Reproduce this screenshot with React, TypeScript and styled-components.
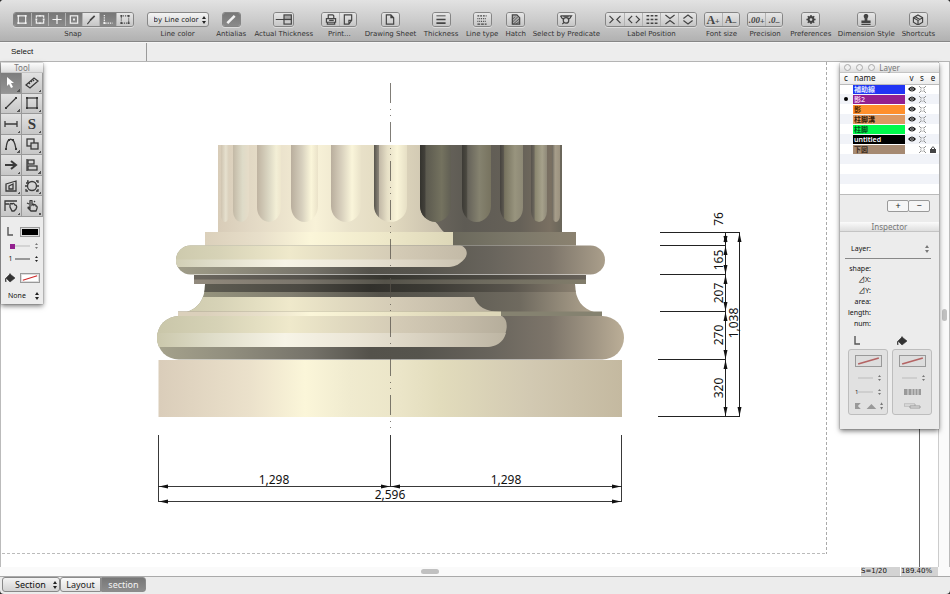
import React from "react";
import styled, { createGlobalStyle, css } from "styled-components";

const ui = `"Noto Sans", "Open Sans", "Noto Sans CJK JP", sans-serif`;
const wide = `"DejaVu Sans", "Noto Sans", sans-serif`;
const INK = "#444";

const GlobalStyle = createGlobalStyle`
  * { box-sizing: border-box; }
  html, body, #root { height: 100%; }
  body { margin: 0; background: #2a2a2a; font-family: ${ui}; font-size: 8px; line-height: 10px; color: #222; }
  button, select { font: inherit; color: inherit; margin: 0; padding: 0; }
`;

const Window = styled.div`
  display: flex;
  flex-direction: column;
  height: 100%;
  min-height: 480px;
  overflow: hidden;
  border-radius: 4px;
  background: #ececec;
`;

/* ---------- toolbar ---------- */

const Toolbar = styled.header`
  display: flex;
  justify-content: space-between;
  height: 42px;
  flex: none;
  padding: 12px 15px 0 13px;
  background: linear-gradient(#e2e2e2, #cbcbcb 50%, #b1b1b1);
  border-bottom: 1px solid #868686;
`;

const Group = styled.div<{ $w: number; $gap?: boolean }>`
  display: flex;
  flex-direction: column;
  align-items: center;
  gap: 2px;
  width: ${(p) => p.$w}px;
  margin-left: ${(p) => (p.$gap ? 6 : 0)}px;
`;

const Caption = styled.span`
  font-family: ${wide};
  font-size: 7px;
  line-height: 10px;
  color: #333;
  white-space: nowrap;
`;

const Segments = styled.div`
  display: flex;
  height: 15px;
  border: 1px solid #858585;
  border-radius: 3px;
  overflow: hidden;
  box-shadow: 0 1px 0 #dcdcdc;
`;

const Segment = styled.button<{ $on?: boolean; $w?: number }>`
  display: flex;
  align-items: center;
  justify-content: center;
  width: ${(p) => p.$w ?? 17}px;
  height: 13px;
  border: 0;
  background: ${(p) => (p.$on ? "linear-gradient(#777, #8b8b8b)" : "linear-gradient(#e6e6e6, #c6c6c6)")};
  color: ${(p) => (p.$on ? "#f2f2f2" : INK)};
  & + & { border-left: 1px solid ${(p) => (p.$on ? "#868686" : "#b2b2b2")}; }
`;

const SelectWrap = styled.span<{ $w?: number; $h?: number; $plain?: boolean }>`
  position: relative;
  display: inline-flex;
  align-items: center;
  width: ${(p) => (p.$w ? `${p.$w}px` : "100%")};
  height: ${(p) => p.$h ?? 10}px;
  ${(p) =>
    !p.$plain &&
    css`
      border: 1px solid #888;
      border-radius: 3px;
      background: linear-gradient(#f4f4f4, #d2d2d2);
    `}
  & > svg { position: absolute; right: 2px; pointer-events: none; }
`;

const Select = styled.select<{ $size?: number; $pad?: number; $wide?: boolean }>`
  appearance: none;
  width: 100%;
  height: 100%;
  border: 0;
  background: transparent;
  padding: 0 0 0 ${(p) => p.$pad ?? 0}px;
  font-family: ${(p) => (p.$wide ? wide : ui)};
  font-size: ${(p) => p.$size ?? 8}px;
  line-height: 10px;
  color: #111;
`;

const Arrows = ({ light }: { light?: boolean }) => (
  <svg width="4" height="8" viewBox="0 0 4 8" fill={light ? "#777" : "#222"}>
    <path d="M0 3 2 0 4 3zM0 5h4L2 8z" />
  </svg>
);

const icons: Record<string, React.ReactNode> = {
  snapEnd: (<><rect x="3" y="2" width="8" height="8" /><path d="M2 1h2v2H2zM10 1h2v2h-2zM2 9h2v2H2zM10 9h2v2h-2z" fill="currentColor" stroke="none" /></>),
  snapMid: (<><path d="M3 4V2h3M8 2h3v2M11 7v3H8M6 10H3V7" /><path d="M6 1h2v2H6zM6 9h2v2H6zM2 5h2v2H2zM10 5h2v2h-2z" fill="currentColor" stroke="none" /></>),
  snapCross: (<><path d="M7 1v10M2 6h10" /><circle cx="7" cy="6" r="1" fill="currentColor" stroke="none" /></>),
  snapCenter: (<><rect x="3" y="2" width="8" height="8" /><path d="M6 5h2v2H6z" fill="currentColor" stroke="none" /></>),
  snapLine: (<><path d="M3 11 7 6" /><path d="M6 7 11 2" strokeWidth="1.8" /></>),
  snapAxis: (<><path d="M3 1v9h9" strokeDasharray="1.5 1" /><path d="M2 9h2v2H2z" fill="currentColor" stroke="none" /></>),
  snapGrid: (<><rect x="3" y="2" width="8" height="8" strokeDasharray="1 1" /><path d="M2 1h2v2H2zM10 1h2v2h-2zM2 9h2v2H2zM10 9h2v2h-2z" fill="currentColor" stroke="none" /></>),
  antialias: <path d="M3 10 11 2" strokeWidth="2.8" />,
  actual: (<><path d="M0 6h9" /><rect x="9" y="1" width="8" height="5" fill="#a5a5a5" /><rect x="9" y="6" width="8" height="5" fill="#ccc" /></>),
  print: (<><path d="M4 5V1h5l1 1v3M2 9V5h10v4zM3 9h8v2H3zM5 7h5" /></>),
  page: (<><path d="M3 1h8v6l-3 4H3zM11 7H8v4" /></>),
  sheet: <path d="M3 1h5l3 3v7H3zM8 1v3h3" />,
  thickness: (<><path d="M2 2h10" strokeWidth="1" /><path d="M2 6h10" strokeWidth="1.6" /><path d="M2 10h10" strokeWidth="2" /></>),
  linetype: (<><path d="M2 2h10" strokeDasharray="2 1" /><path d="M2 5h10M2 8h10" strokeDasharray="1 1" /><path d="M2 11h10" strokeDasharray="3 1" /></>),
  hatch: (<><path d="M3 1h5l3 3v7H3z" fill="#aaa" /><path d="m3 6 3-3M3 9l6-6M4 11l7-6M7 11l4-3" strokeWidth=".8" /></>),
  predicate: (<><path d="M1 2h12l-2 3h-2M1 2l2 3h2" /><path d="M4 3h6" /><circle cx="7" cy="7" r="3" /><path d="m5 9-2 2" /></>),
  lp1: <path d="m1 2 4 4-4 4M13 2 9 6l4 4" />,
  lp2: <path d="M5 2 1 6l4 4M9 2l4 4-4 4" />,
  lp3: <path d="M1 2h12M1 6h12M1 10h12" strokeDasharray="3 1.5" strokeWidth="1.6" />,
  lp4: <path d="m2 1 5 4 5-4M2 11l5-4 5 4" />,
  lp5: <path d="m2 5 5-4 5 4M2 7l5 4 5-4" />,
  gear: (<><circle cx="7" cy="6" r="2.6" strokeWidth="2.2" /><path d="M7 1v2M7 9v2M2 6h2M10 6h2M3.5 2.5 5 4M9 8l1.5 1.5M10.5 2.5 9 4M5 8 3.5 9.5" strokeWidth="1.6" /></>),
  stamp: <path d="M7 0c3 0 3 3 1.5 5v2H12v3H2V7h3.5V5C4 3 4 0 7 0zM2 11h10v1H2z" fill="currentColor" stroke="none" />,
  box: <path d="m7 1 5 3v5l-5 3-5-3V4zM2 4l5 3 5-3M7 7v5M4 3l5 3" />,
  arrow: <path d="m3 0 7 6H7l2 4-2 1-2-4-2 2z" fill="#fff" stroke="none" />,
  ruler: <path d="m1 8 8-7 4 3-8 7zM4 6l1 1M6 4l1 1M8 3l1 1" />,
  line: (<><path d="m2 11 10-10" /><path d="M1 10h2v2H1zM11 0h2v2h-2z" fill="currentColor" stroke="none" /></>),
  rect: (<><rect x="2" y="1" width="10" height="10" /><path d="M1 0h2v2H1zM11 0h2v2h-2zM1 10h2v2H1zM11 10h2v2h-2z" fill="currentColor" stroke="none" /></>),
  dim: <path d="M1 3v6M13 3v6M1 6h12" />,
  arc: (<><path d="M2 11C3-2 10-2 12 11" /><path d="M1 10h2v2H1zM11 10h2v2h-2zM4 1h2v2H4zM8 1h2v2H8z" fill="currentColor" stroke="none" /></>),
  copy: (<><rect x="2" y="1" width="7" height="7" /><rect x="6" y="5" width="7" height="6" fill="#ccc" /></>),
  right: <path d="M1 6h10M7 2l5 4-5 4" strokeWidth="2" />,
  align: (<><path d="M2 0v12" /><rect x="3" y="1" width="6" height="4" /><rect x="3" y="7" width="9" height="4" /></>),
  offset: (<><path d="m2 4 10-3v10H2zM5 6l4-2v5H5z" /></>),
  circle: (<><circle cx="7" cy="6" r="4.5" /><path d="M2 1h1v2H1M11 1h2v2M1 9v2h2M13 9v2h-2M0 6h2M12 6h2" /></>),
  handL: (<><path d="M1 11V1h12M1 4h4" /><path d="M6 7V4c1-1 1-1 2 0 1-1 2-1 3 1 2 0 2 2 1 4l-2 2H8z" /></>),
  hand: <path d="M5 8V1c0-1 2-1 2 0v4c1-1 2-1 2 0 1-1 2 0 2 1 2 0 1 3 0 5H6L3 8c0-1 1-1 2 0zM2 3l2 1M9 2l1-1" />,
};

const Icon = ({ name, w = 14, h = 12 }: { name: string; w?: number; h?: number }) => (
  <svg width={w} height={h} viewBox={name === "actual" ? "0 0 18 12" : "0 0 14 12"} fill="none" stroke="currentColor" strokeWidth="1.3" aria-hidden="true">
    {icons[name]}
  </svg>
);

const Glyph = styled.span<{ $size: number }>`
  display: flex;
  align-items: flex-end;
  font-family: "Liberation Serif", serif;
  font-weight: bold;
  font-size: ${(p) => p.$size}px;
  line-height: 12px;
  white-space: nowrap;
  & > small { font-size: 8px; line-height: 8px; }
`;

type Seg = { icon?: string; on?: boolean; label: string; glyph?: React.ReactNode };
const Tool = ({ w, caption, items, seg = 17 }: { w: number; caption: string; items: Seg[]; seg?: number }) => (
  <Group $w={w}>
    <Segments role="group" aria-label={caption}>
      {items.map((it) => (
        <Segment key={it.label} type="button" aria-label={it.label} aria-pressed={it.on} $on={it.on} $w={seg}>
          {it.icon ? <Icon name={it.icon} w={it.icon === "actual" ? 18 : 14} h={11} /> : it.glyph}
        </Segment>
      ))}
    </Segments>
    <Caption>{caption}</Caption>
  </Group>
);

const StatusBar = styled.div`
  display: flex;
  flex: none;
  height: 20px;
  align-items: stretch;
  border-top: 1px solid #f6f6f6;
  border-bottom: 1px solid #b4b4b4;
  background: #ededed;
`;

const Mode = styled.div`
  width: 147px;
  padding: 4px 0 0 11px;
  border-right: 1px solid #9a9a9a;
  font-family: "Liberation Sans", sans-serif;
  color: #111;
`;

/* ---------- workspace ---------- */

const Workspace = styled.main`
  position: relative;
  display: grid;
  grid-template-columns: minmax(0, 1fr) 12px;
  flex: 1;
  min-height: 0;
`;

const Sheet = styled.div`
  background: #fff;
  border-left: 1px solid #bbb;
  min-height: 0;
  & > svg { display: block; width: 100%; height: 100%; }
`;

const VScroll = styled.div`
  display: flex;
  align-items: center;
  justify-content: center;
  border-left: 1px solid #ccc;
  border-right: 1px solid #bbb;
  background: #fafafa;
`;

const Thumb = styled.div<{ $w: number; $h: number }>`
  width: ${(p) => p.$w}px;
  height: ${(p) => p.$h}px;
  border-radius: 3px;
  background: #c1c1c1;
`;

const BottomStrip = styled.div`
  display: grid;
  grid-template-columns: minmax(0, 1fr) 40px 38px 12px;
  flex: none;
  height: 10px;
  background: #fafafa;
  border-bottom: 1px solid #aaa;
`;

const HScroll = styled.div`
  display: flex;
  align-items: center;
  justify-content: center;
`;

const Readout = styled.output`
  border-left: 1px solid #fff;
  background: #d3d3d3;
  font-family: ${wide};
  font-size: 7px;
  line-height: 9px;
  color: #111;
  white-space: nowrap;
`;

const Footer = styled.footer`
  display: flex;
  flex: none;
  height: 17px;
  padding: 0 2px 2px;
`;

const Tab = styled.button<{ $on?: boolean }>`
  width: ${(p) => (p.$on ? 45 : 41)}px;
  border: 1px solid #8b8b8b;
  background: ${(p) => (p.$on ? "linear-gradient(#777, #8c8c8c)" : "linear-gradient(#fbfbfb, #dedede)")};
  color: ${(p) => (p.$on ? "#f4f4f4" : "#222")};
  border-radius: ${(p) => (p.$on ? "0 3px 3px 0" : "3px 0 0 3px")};
  font-size: 9px;
  line-height: 12px;
`;

/* ---------- drawing ---------- */

type Stop = [number, string];
const Grad = ({ id, a, b, stops }: { id: string; a: number; b: number; stops: Stop[] }) => (
  <linearGradient id={id} gradientUnits="userSpaceOnUse" x1={a} x2={b} y1="0" y2="0">
    {stops.map(([x, c]) => (
      <stop key={x} offset={(x - a) / (b - a)} stopColor={c} />
    ))}
  </linearGradient>
);

const flutes: { a: number; b: number; stops: [number, string][] }[] = [
  { a: 221, b: 229, stops: [[0, "#cfc4b0"], [0.6, "#e6e0ce"], [1, "#d9cfbb"]] },
  { a: 233, b: 249, stops: [[0, "#c3b9a6"], [0.6, "#dedbc8"], [1, "#e6dcc8"]] },
  { a: 257, b: 281, stops: [[0, "#bfb3a1"], [0.5, "#dcd8c4"], [0.8, "#f3efd6"], [1, "#eee6cd"]] },
  { a: 291, b: 318, stops: [[0, "#b9ae9d"], [0.4, "#d6cfbd"], [0.75, "#fbf6da"], [1, "#eae2c9"]] },
  { a: 331, b: 361, stops: [[0, "#b9ae9d"], [0.35, "#d8d0bd"], [0.7, "#faf5da"], [1, "#e9e2c9"]] },
  { a: 374, b: 407, stops: [[0, "#57544c"], [0.15, "#8d877b"], [0.16, "#c2b9a7"], [0.4, "#e6dfc6"], [0.7, "#faf5d9"], [1, "#e6dfc5"]] },
  { a: 420, b: 451, stops: [[0, "#34332e"], [0.15, "#42403a"], [0.2, "#5c5a4f"], [0.7, "#74725f"], [1, "#615f54"]] },
  { a: 462, b: 491, stops: [[0, "#3c3a35"], [0.15, "#4a4840"], [0.2, "#66635a"], [0.6, "#85826f"], [1, "#77735f"]] },
  { a: 500, b: 523, stops: [[0, "#45423d"], [0.15, "#5a564e"], [0.2, "#77735f"], [0.65, "#98947e"], [1, "#8d8875"]] },
  { a: 531, b: 547, stops: [[0, "#57534c"], [0.2, "#6b665c"], [0.25, "#8a866f"], [0.7, "#a6a18b"], [1, "#8f8979"]] },
  { a: 552, b: 560, stops: [[0, "#6b665d"], [0.4, "#a69d8a"], [1, "#9c927f"]] },
];

const flutePath = (a: number, b: number) => {
  const r = (b - a) / 2;
  const ry = Math.min(16, r + 3);
  return `M${a} 145V${222 - ry}A${r} ${ry} 0 0 0 ${b} ${222 - ry}V145z`;
};

const arrowH = (x: number, y: number, d: number) => `M${x} ${y}l${d * 9} -2v4z`;
const arrowV = (x: number, y: number, d: number) => `M${x} ${y}l-2 ${d * 9}h4z`;

const DimText = styled.text`
  font-family: "Noto Sans", "Open Sans", sans-serif;
  font-size: 12px;
  text-anchor: middle;
  fill: #111;
`;

const levels = [232, 245, 274, 311, 359, 416];

const arrowheads = [
  arrowH(159, 486.5, 1), arrowH(390, 486.5, -1), arrowH(391, 486.5, 1), arrowH(621, 486.5, -1),
  arrowH(159, 501.5, 1), arrowH(621, 501.5, -1), arrowV(739.5, 233, 1), arrowV(739.5, 416, -1),
  ...levels.slice(0, -1).flatMap((y, i) => [arrowV(725.5, y + 1, 1), arrowV(725.5, levels[i + 1], -1)]),
];

const Drawing = () => (
  <svg viewBox="1 62 937 505" role="img" aria-label="Elevation of a column base with dimensions">
    <defs>
      <Grad id="shaft" a={218} b={440} stops={[[218, "#d8ccb8"], [250, "#e2d8c4"], [290, "#eee6cf"], [315, "#f8f2d8"], [350, "#eae3cb"], [390, "#e2dac0"], [440, "#c9c0ac"]]} />
      <Grad id="shaftDark" a={420} b={562} stops={[[420, "#6f6a60"], [465, "#5e5b54"], [520, "#666158"], [550, "#7a7062"], [562, "#6a665a"]]} />
      <Grad id="fillet" a={205} b={453} stops={[[205, "#dbd0bb"], [260, "#e8dfca"], [310, "#fbf6d9"], [380, "#efe9ca"], [453, "#ddd7b8"]]} />
      <Grad id="filletDark" a={453} b={576} stops={[[453, "#6b695c"], [520, "#7d796a"], [576, "#8b8270"]]} />
      <Grad id="torus" a={157} b={507} stops={[[157, "#c9c6a9"], [220, "#d7d3b7"], [290, "#efe9cb"], [340, "#e1dac0"], [400, "#d3cab5"], [460, "#c4bba8"], [507, "#b5ad9b"]]} />
      <Grad id="shine" a={157} b={507} stops={[[157, "#cbc8ac"], [210, "#dedcc8"], [285, "#f7f4e7"], [350, "#ece7d8"], [410, "#dcd5c4"], [507, "#bdb5a3"]]} />
      <Grad id="shade" a={157} b={624} stops={[[157, "#a5a28c"], [230, "#918e7e"], [310, "#76736a"], [370, "#54524b"], [420, "#56544d"], [490, "#68645c"], [550, "#7d756a"], [595, "#a29785"], [624, "#bbae97"]]} />
      <Grad id="neckTop" a={194} b={586} stops={[[194, "#6b675f"], [300, "#56534d"], [385, "#35342e"], [430, "#3f3e38"], [500, "#4d4a43"], [586, "#68625a"]]} />
      <Grad id="neckLow" a={194} b={586} stops={[[194, "#928a7d"], [300, "#7b766c"], [385, "#55534a"], [480, "#6d6a5e"], [586, "#827d6b"]]} />
      <Grad id="scotiaTop" a={205} b={575} stops={[[205, "#5d5b51"], [300, "#4b4942"], [370, "#31302b"], [430, "#3b3a34"], [510, "#58544c"], [575, "#8a8070"]]} />
      <Grad id="scotiaMid" a={190} b={592} stops={[[190, "#98967f"], [290, "#827f71"], [380, "#54524a"], [440, "#5b5951"], [520, "#6f6a5f"], [592, "#aea28d"]]} />
      <Grad id="plinth" a={159} b={622} stops={[[159, "#dacdba"], [250, "#ebe1cb"], [305, "#fbf6d9"], [350, "#f0ebcf"], [400, "#ebe5c8"], [440, "#e2dcbc"], [530, "#d2c9b2"], [622, "#c4b9a0"]]} />
      {flutes.map((f) => (
        <Grad key={f.a} id={`flute${f.a}`} a={f.a} b={f.b} stops={f.stops.map(([t, c]): Stop => [f.a + t * (f.b - f.a), c])} />
      ))}
      <clipPath id="scotiaClip"><path d="M205 284H575C575 300 583 309 594 312H187C198 308 205 300 205 284z" /></clipPath>
      <clipPath id="torusClip"><rect x="157" y="316" width="467" height="43.5" rx="21.7" /></clipPath>
      <clipPath id="upperClip"><rect x="176" y="245.5" width="429" height="29" rx="14.5" /></clipPath>
    </defs>

    <path d="M218 145H562V232H218z" fill="url(#shaftDark)" />
    <path d="M218 145H420V205C420 216 428 221 434 221C438 223 440 229 444 232H218z" fill="url(#shaft)" />
    {flutes.map((f) => (
      <path key={f.a} d={flutePath(f.a, f.b)} fill={`url(#flute${f.a})`} />
    ))}
    <path d="M205 232H453V245.5H205z" fill="url(#fillet)" />
    <path d="M453 232H576V245.5H453z" fill="url(#filletDark)" />

    <g clipPath="url(#upperClip)">
      <path d="M170 245H610V275H170z" fill="url(#shade)" />
      <path d="M170 245H460C470 249 468 258 460 263C457 266 451 267 447 267H170z" fill="url(#torus)" />
      <path d="M170 259.5H463C458 266 450 267 446 267H170z" fill="url(#shine)" />
    </g>
    <path d="M194 275H586V280H194z" fill="url(#neckTop)" />
    <path d="M194 279.5H586V284H194z" fill="url(#neckLow)" />
    <g clipPath="url(#scotiaClip)">
      <path d="M184 284H597V312H184z" fill="url(#scotiaMid)" />
      <path d="M184 284H597V292H184z" fill="url(#scotiaTop)" />
      <path d="M184 297H474C478 307 485 311 500 312H184z" fill="url(#torus)" />
    </g>
    <path d="M178 311.5H602V316H178z" fill="#858270" />
    <path d="M178 311.5H501V316H178z" fill="url(#fillet)" />
    <g clipPath="url(#torusClip)">
      <path d="M157 316H624V360H157z" fill="url(#shade)" />
      <path d="M157 316H502C512 322 506 347 485 347H157z" fill="url(#torus)" />
      <path d="M157 333H506C503 343 496 347 485 347H157z" fill="url(#shine)" />
    </g>
    <path d="M158.5 360H622V417H158.5z" fill="url(#plinth)" />

    <path d="M390.5 83V432" stroke="#55524a" strokeWidth="1" strokeDasharray="20 6 1 5 1 6" strokeOpacity=".75" />
    <g stroke="#222" strokeWidth="1" fill="none">
      <path d="M158.5 435V501M390.5 435V487M621.5 435V501M158 486.5H622M158 501.5H622" strokeWidth=".9" />
      {levels.map((y) => (
        <path key={y} d={`M${y > 350 ? 658 : 660} ${y + 0.5}H${y === 232 || y === 416 ? 740 : 726}`} />
      ))}
      <path d="M725.5 232V417M739.5 232V417" />
    </g>
    <g fill="#111">
      {arrowheads.map((d) => <path key={d} d={d} />)}
    </g>
    <DimText x="274" y="484">1,298</DimText>
    <DimText x="506" y="484">1,298</DimText>
    <DimText x="390" y="499">2,596</DimText>
    {[["76", 219], ["165", 260], ["207", 293], ["270", 335], ["320", 388]].map(([t, y]) => (
      <DimText key={t} transform={`translate(723 ${y}) rotate(-90)`}>{t}</DimText>
    ))}
    <DimText transform="translate(738 323) rotate(-90)">1,038</DimText>

    <path d="M826.5 62V554" stroke="#aaa" strokeDasharray="3 2" />
    <path d="M2 553.5H826" stroke="#bbb" strokeDasharray="3 2" />
    <path d="M919.5 427V567" stroke="#666" />
  </svg>
);

/* ---------- floating palettes ---------- */

const Palette = styled.section<{ $side: "left" | "right"; $w: number }>`
  position: absolute;
  top: 1px;
  ${(p) => (p.$side === "left" ? "left: 1px;" : "right: 11px;")}
  width: ${(p) => p.$w}px;
  background: #ececec;
  box-shadow: 0 2px 5px #0008, 0 0 1px #0008;
`;

const PaletteTitle = styled.h2`
  display: flex;
  align-items: center;
  justify-content: center;
  position: relative;
  margin: 0;
  height: 10px;
  background: linear-gradient(#fbfbfb, #dedede);
  border-bottom: 1px solid #c4c4c4;
  font-size: 8px;
  line-height: 9px;
  font-weight: normal;
  color: #777;
`;

const Lights = styled.span`
  position: absolute;
  left: 4px;
  display: flex;
  gap: 5px;
  & > i { width: 7px; height: 7px; border: 1px solid #aaa; border-radius: 50%; background: #f0f0f0; }
`;

const ToolGrid = styled.div`
  display: grid;
  grid-template-columns: 1fr 1fr;
  grid-template-rows: repeat(7, 1fr);
  height: 144px;
`;

const ToolButton = styled.button<{ $on?: boolean }>`
  display: flex;
  align-items: center;
  justify-content: center;
  border: 1px solid #999;
  border-width: 0 1px 1px 0;
  background:
    linear-gradient(135deg, transparent 50%, #555 50%) right 1px bottom 1px / 3px 3px no-repeat,
    ${(p) => (p.$on ? "linear-gradient(#7d7d7d, #959595)" : "linear-gradient(#e2e2e2, #c6c6c6)")};
  color: #3a3a3a;
`;

const Bold = styled.b`
  font: bold 15px/16px "Liberation Serif", serif;
`;

const StyleGrid = styled.div`
  display: grid;
  grid-template-columns: 17px 1fr;
  grid-template-rows: 14px 14px 12px 25px;
  align-items: center;
  justify-items: center;
  padding: 8px 2px 0 1px;
  font-size: 7px;
`;

const Swatch = styled.button<{ $w: number }>`
  display: flex;
  width: ${(p) => p.$w}px;
  height: ${(p) => (p.$w > 22 ? 12 : 10)}px;
  padding: 1px;
  border: 1px solid #999;
  background: #ddd;
  & > svg { flex: 1; height: 100%; width: 100%; }
`;

const Purple = styled.span`
  width: 5px;
  height: 5px;
  margin-left: 4px;
  background: #93208f;
`;

const NoneRow = styled.div`
  height: 14px;
  padding: 0 2px 0 7px;
`;

const NoFill = ({ w, soft }: { w: number; soft?: boolean }) => (
  <Swatch type="button" $w={w} aria-label="No colour">
    <svg viewBox="0 0 20 8" preserveAspectRatio="none"><rect width="20" height="8" fill={soft ? "#ddd" : "#fff"} /><path d="M1 7 19 1" stroke={soft ? "#b46464" : "#d02a2a"} strokeWidth="1.4" /></svg>
  </Swatch>
);

const Bucket = () => (
  <svg width="11" height="10" viewBox="0 0 11 10" aria-hidden="true">
    <path d="m5 1 5 4-5 4-4-4zM1 5c-1 1-1 3 0 4zM5 0v5" fill="#333" stroke="#333" strokeWidth=".6" />
  </svg>
);

const Pen = () => (
  <svg width="9" height="10" viewBox="0 0 9 10" fill="none" stroke="#555" aria-hidden="true"><path d="M2 0v8h5" strokeWidth="1.4" /></svg>
);

const LineSelect = ({ label, soft }: { label: string; soft?: boolean }) => (
  <SelectWrap $plain>
    <Select aria-label={label} />
    <svg width="24" height="8" viewBox="0 0 24 8"><path d="M0 4h15" stroke={soft ? "#bbb" : "#444"} /><path d="m20 3 1.5-2L23 3zM20 5h3l-1.500 2z" fill={soft ? "#777" : "#222"} /></svg>
  </SelectWrap>
);

const tools = ["arrow", "ruler", "line", "rect", "dim", "text", "arc", "copy", "right", "align", "offset", "circle", "handL", "hand"];

const LayerTable = styled.table`
  width: 100%;
  table-layout: fixed;
  border-collapse: collapse;
  background: #fff;
  border-bottom: 1px solid #bbb;
  th, td { padding: 0; line-height: 8px; text-align: center; vertical-align: middle; }
  tbody td { height: 10px; }
  th { height: 11px; font-size: 8px; font-weight: normal; color: #111; background: linear-gradient(#fff, #ececec); border-bottom: 1px solid #bbb; }
  th:nth-child(2) { text-align: left; padding-left: 2px; }
  tbody tr:nth-child(even) { background: #f1f3f8; }
  svg { display: block; margin: 0 auto; }
`;

const LayerName = styled.td<{ $bg: string; $fg: string }>`
  && { text-align: left; }
  & > span {
    display: block;
    height: 9px;
    margin: 0 1px;
    padding-left: 1px;
    overflow: hidden;
    background: ${(p) => p.$bg};
    color: ${(p) => p.$fg};
    font-size: 7px;
    font-weight: 600;
    line-height: 9px;
  }
`;

const layers = [
  ["補助線", "#2034f4", "#dfe3ff"],
  ["影2", "#93208f", "#f2ccf0"],
  ["影", "#ff8f2c", "#4a2400"],
  ["柱脚溝", "#dd9862", "#3a1d06"],
  ["柱脚", "#00fa4b", "#00541c"],
  ["untitled", "#000", "#fff"],
  ["下図", "#a68a72", "#3a2a1c"],
];

const Eye = () => (
  <svg width="8" height="6" viewBox="0 0 8 6"><path d="M0 3q4-5 8 0-4 5-8 0z" fill="#111" /><circle cx="4" cy="3" r="1.6" fill="#fff" /><circle cx="4" cy="3" r=".9" fill="#111" /></svg>
);
const Snap = () => (
  <svg width="7" height="7" viewBox="0 0 7 7" fill="none" stroke="#777" strokeWidth=".8"><circle cx="3.5" cy="3.5" r="1.8" strokeDasharray="1 .6" /><path d="m0 0 2 2M7 0 5 2M0 7l2-2M7 7 5 5" /></svg>
);
const Lock = () => (
  <svg width="6" height="7" viewBox="0 0 6 7"><path d="M0 3h6v4H0z" fill="#444" /><path d="M1.5 3V2q1.5-2.5 3 0v1" fill="none" stroke="#444" /></svg>
);

const AddRow = styled.div`
  display: flex;
  justify-content: flex-end;
  padding: 5px 9px 10px;
`;

const AddButton = styled.button`
  width: 22px;
  height: 12px;
  border: 1px solid #999;
  border-radius: 2px;
  background: #f6f6f6;
  font-size: 9px;
  line-height: 9px;
  & + & { margin-left: -1px; }
`;

const LayerPick = styled.label`
  display: grid;
  grid-template-columns: 26px 1fr;
  gap: 4px;
  margin: 0 8px 4px 5px;
  padding: 12px 0 4px;
  border-bottom: 1px solid #888;
  text-align: right;
  font-size: 7px;
  color: #111;
`;

const Fields = styled.dl`
  margin: 0;
  width: 31px;
  text-align: right;
  font-size: 7px;
  color: #111;
  & > dt { line-height: 11px; white-space: nowrap; }
`;

const Attr = styled.div`
  display: grid;
  grid-template-columns: minmax(0, 1fr) minmax(0, 1fr);
  column-gap: 4px;
  padding: 7px 7px 14px 8px;
`;

const AttrHead = styled.div`
  padding: 0 0 2px 5px;
  height: 13px;
`;

const AttrBox = styled.div`
  display: grid;
  grid-template-columns: minmax(0, 1fr);
  grid-template-rows: 22px 13px 14px 14px;
  align-items: center;
  justify-items: center;
  height: 66px;
  padding: 0 3px;
  border: 1px solid #bdbdbd;
  border-radius: 3px;
  background: #e1e1e1;
`;

const ThinRow = styled.div`
  display: flex;
  align-items: center;
  justify-content: space-between;
  width: 100%;
  padding-left: 3px;
  font-size: 6px;
`;

const LayerPalette = () => (
  <Palette $side="right" $w={99} aria-label="Layer and inspector">
    <PaletteTitle><Lights><i /><i /><i /></Lights>Layer</PaletteTitle>
    <LayerTable>
      <colgroup><col width="12" /><col width="54" /><col width="11" /><col width="10" /><col width="12" /></colgroup>
      <thead><tr>{["c", "name", "v", "s", "e"].map((h) => <th key={h} scope="col">{h}</th>)}</tr></thead>
      <tbody>
        {layers.map(([name, bg, fg], i) => (
          <tr key={name}>
            <td>{i === 1 && <svg width="4" height="4"><circle cx="2" cy="2" r="2" /></svg>}</td>
            <LayerName $bg={bg} $fg={fg}><span>{name}</span></LayerName>
            <td>{i < 6 && <Eye />}</td>
            <td><Snap /></td>
            <td>{i === 6 && <Lock />}</td>
          </tr>
        ))}
        {[0, 1, 2, 3].map((i) => <tr key={i}><td colSpan={5} /></tr>)}
      </tbody>
    </LayerTable>
    <AddRow>
      <AddButton type="button" aria-label="Add layer">+</AddButton>
      <AddButton type="button" aria-label="Remove layer">−</AddButton>
    </AddRow>
    <PaletteTitle>Inspector</PaletteTitle>
    <LayerPick>
      Layer:
      <SelectWrap $plain><Select /><Arrows light /></SelectWrap>
    </LayerPick>
    <Fields>
      {["shape:", "⊿X:", "⊿Y:", "area:", "length:", "num:"].map((f) => <dt key={f}>{f}</dt>)}
    </Fields>
    <Attr>
      <AttrHead><Pen /></AttrHead>
      <AttrHead><Bucket /></AttrHead>
      <AttrBox>
        <NoFill w={27} soft />
        <LineSelect label="Line style" soft />
        <ThinRow>1<LineSelect label="Line width" soft /></ThinRow>
        <ThinRow>
          <svg width="30" height="8" viewBox="0 0 30 8" fill="#999"><path d="M0 1h6L3 4l3 3H0zM12 7l5-5 5 5z" /><path d="m26 3 1.5-3L29 3zM26 5h3l-1.5 3z" fill="#777" /></svg>
        </ThinRow>
      </AttrBox>
      <AttrBox>
        <NoFill w={27} soft />
        <LineSelect label="Fill style" soft />
        <svg width="17" height="6" viewBox="0 0 17 6"><path d="M0 0h17v6H0z" fill="#999" /><path d="M4 0v6M8 0v6M11 0v6M14 0v6" stroke="#ddd" /></svg>
        <svg width="17" height="6" viewBox="0 0 17 6"><path d="M0 1h11v2H0z" fill="#fff" stroke="#aaa" /><path d="M6 3h10v2H6z" fill="#eee" stroke="#999" /></svg>
      </AttrBox>
    </Attr>
  </Palette>
);

const ToolPalette = () => (
  <Palette $side="left" $w={42} aria-label="Tool">
    <PaletteTitle>Tool</PaletteTitle>
    <ToolGrid>
      {tools.map((t, i) => (
        <ToolButton key={t} type="button" aria-label={t} $on={i === 0}>
          {t === "text" ? <Bold>S</Bold> : <Icon name={t} />}
        </ToolButton>
      ))}
    </ToolGrid>
    <StyleGrid>
      <Pen />
      <Swatch type="button" $w={20} aria-label="Line colour"><svg viewBox="0 0 20 8" preserveAspectRatio="none"><rect width="20" height="8" /></svg></Swatch>
      <Purple />
      <LineSelect label="Line type" soft />
      <span>1</span>
      <LineSelect label="Line thickness" />
      <Bucket />
      <NoFill w={20} />
    </StyleGrid>
    <NoneRow>
      <SelectWrap $plain><Select aria-label="Fill" $size={7}><option>None</option></Select><Arrows /></SelectWrap>
    </NoneRow>
  </Palette>
);

const one = (icon: string, label: string, on?: boolean): Seg[] => [{ icon, label, on }];

export default function App() {
  return (
    <>
      <GlobalStyle />
      <Window>
        <Toolbar>
          <Tool w={120} caption="Snap" items={["snapEnd", "snapMid", "snapCross", "snapCenter", "snapLine", "snapAxis", "snapGrid"].map((icon, i) => ({ icon, label: icon, on: i < 4 || i === 5 }))} />
          <Group $w={62} $gap>
            <SelectWrap $w={62} $h={15}>
              <Select aria-label="Line color" $pad={6} $size={7} $wide><option>by Line color</option></Select>
              <Arrows />
            </SelectWrap>
            <Caption>Line color</Caption>
          </Group>
          <Tool w={30} caption="Antialias" items={one("antialias", "Antialias", true)} />
          <Tool w={60} caption="Actual Thickness" seg={19} items={one("actual", "Actual Thickness")} />
          <Tool w={36} caption="Print..." items={[{ icon: "print", label: "Print" }, { icon: "page", label: "Page setup" }]} />
          <Tool w={51} caption="Drawing Sheet" items={one("sheet", "Drawing Sheet")} />
          <Tool w={35} caption="Thickness" items={one("thickness", "Thickness")} />
          <Tool w={32} caption="Line type" items={one("linetype", "Line type")} />
          <Tool w={20} caption="Hatch" items={one("hatch", "Hatch")} />
          <Tool w={66} caption="Select by Predicate" items={one("predicate", "Select by Predicate")} />
          <Tool w={89} caption="Label Position" seg={18} items={["lp1", "lp2", "lp3", "lp4", "lp5"].map((icon) => ({ icon, label: icon }))} />
          <Tool w={36} caption="Font size" items={[{ label: "Larger", glyph: <Glyph $size={12}>A<small>+</small></Glyph> }, { label: "Smaller", glyph: <Glyph $size={10}>A<small>–</small></Glyph> }]} />
          <Tool w={36} caption="Precision" items={[{ label: "More digits", glyph: <Glyph $size={9}><i>.00</i><small>+</small></Glyph> }, { label: "Fewer digits", glyph: <Glyph $size={9}><i>.0</i><small>–</small></Glyph> }]} />
          <Tool w={40} caption="Preferences" items={one("gear", "Preferences")} />
          <Tool w={56} caption="Dimension Style" items={one("stamp", "Dimension Style")} />
          <Tool w={33} caption="Shortcuts" items={one("box", "Shortcuts")} />
        </Toolbar>
        <StatusBar><Mode>Select</Mode></StatusBar>
        <Workspace>
          <Sheet><Drawing /></Sheet>
          <VScroll><Thumb $w={5} $h={12} /></VScroll>
          <ToolPalette />
          <LayerPalette />
        </Workspace>
        <BottomStrip>
          <HScroll><Thumb $w={18} $h={5} /></HScroll>
          <Readout>S=1/20</Readout>
          <Readout>189.40%</Readout>
          <span />
        </BottomStrip>
        <Footer>
          <SelectWrap $w={58} $h={15}>
            <Select aria-label="Drawing" $pad={12} $size={9}><option>Section</option></Select>
            <Arrows />
          </SelectWrap>
          <Tab type="button">Layout</Tab>
          <Tab type="button" $on aria-pressed>section</Tab>
        </Footer>
      </Window>
    </>
  );
}
